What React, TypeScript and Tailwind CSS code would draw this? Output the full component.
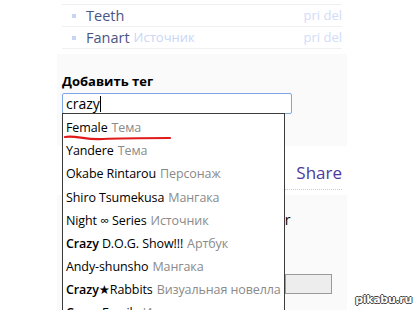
import React from "react";

const font = { fontFamily: '"Open Sans", "Noto Sans", "DejaVu Sans", sans-serif' };

type Item = { name: string; bold?: string; rest?: string; kind: string };

const items: Item[] = [
  { name: "Female", kind: "Тема" },
  { name: "Yandere", kind: "Тема" },
  { name: "Okabe Rintarou", kind: "Персонаж" },
  { name: "Shiro Tsumekusa", kind: "Мангака" },
  { name: "Night ∞ Series", kind: "Источник" },
  { name: "", bold: "Crazy", rest: " D.O.G. Show!!!", kind: "Артбук" },
  { name: "Andy-shunsho", kind: "Мангака" },
  { name: "", bold: "Crazy", rest: "★Rabbits", kind: "Визуальная новелла" },
  { name: "", bold: "Crazy", rest: " Family", kind: "Источник" },
];

const TagRow = ({ title, kind }: { title: string; kind?: string }) => (
  <div className="flex items-center h-[22px] border-b border-[#f0f0f0] pl-[10px] pr-0">
    <span className="w-[4px] h-[4px] bg-[#c6d4f6] mr-[10px]" />
    <span className="text-[14.5px] text-[#4a5585]">{title}</span>
    {kind && <span className="text-[13px] text-[#c9d6f7] ml-[4px]">{kind}</span>}
    <span className="ml-auto text-[13px] text-[#d2dcf8]">pri del</span>
  </div>
);

export default function App() {
  return (
    <div className="relative w-[413px] h-[310px] overflow-hidden bg-white" style={font}>
      {/* tag list */}
      <div className="ml-[62px] w-[280px] pt-[4px]">
        <div className="border-t border-[#f0f0f0]">
          <TagRow title="Teeth" />
          <TagRow title="Fanart" kind="Источник" />
        </div>
      </div>

      {/* add tag panel */}
      <div className="ml-[57px] w-[290px] mt-[5px] h-[92px] bg-[#fafafa] pl-[5px] pt-[19px]">
        <div className="text-[13px] font-bold text-black leading-[17px]">Добавить тег</div>
        <div className="mt-[3px] w-[230px] h-[21px] border border-[#7ea6e6] rounded-[2px] bg-white flex items-center pl-[3px] text-[14px] text-black">
          crazy<span className="inline-block w-px h-[16px] bg-black" />
        </div>
      </div>

      {/* share */}
      <div className="ml-[57px] w-[285px] h-[44px] flex flex-col items-end justify-end">
        <span className="text-[17px] text-[#4c3a9e] leading-[22px]">Share</span>
        <div className="w-[57px] mt-[5px] border-b border-dotted border-[#b8cbee]" />
      </div>

      {/* lower panel */}
      <div className="ml-[57px] w-[290px] mt-[5px] h-[130px] bg-[#fafafa] pt-[16px] pl-[220px]">
        <div className="text-[14px] text-black leading-[18px]">er</div>
        <div className="mt-[45px] ml-[8px] w-[47px] h-[20px] bg-[#ededed] border border-[#9a9a9a]" />
      </div>

      {/* autocomplete dropdown */}
      <div className="absolute left-[62px] top-[113px] w-[223px] h-[220px] bg-white border border-[#3c3c3c] pt-[3px] pl-[3px]">
        {items.map((it, i) => (
          <div key={i} className="h-[23.15px] flex items-center whitespace-nowrap text-[12.5px] tracking-[-0.1px] text-black">
            <span className="whitespace-pre">
              {it.bold ? (
                <>
                  <span className="font-semibold">{it.bold}</span>
                  {it.rest}
                </>
              ) : (
                it.name
              )}
            </span>
            <span className="ml-[4px] text-[#8a8a8a]">{it.kind}</span>
          </div>
        ))}
      </div>

      {/* red underline */}
      <svg className="absolute left-[63px] top-[134px]" width="110" height="8" viewBox="0 0 110 8">
        <path d="M2 3 C 12 1, 22 6, 40 5 S 90 4, 107 4" fill="none" stroke="#e01b1b" strokeWidth="2.2" strokeLinecap="round" />
      </svg>

      {/* watermark */}
      <div
        className="absolute right-[1px] bottom-[2px] text-[11px] font-bold text-white tracking-[-0.3px]"
        style={{ fontFamily: '"DejaVu Sans", sans-serif', textShadow: "1px 0 #444, -1px 0 #444, 0 1px #444, 0 -1px #444" }}
      >
        pikabu.ru
      </div>
    </div>
  );
}
